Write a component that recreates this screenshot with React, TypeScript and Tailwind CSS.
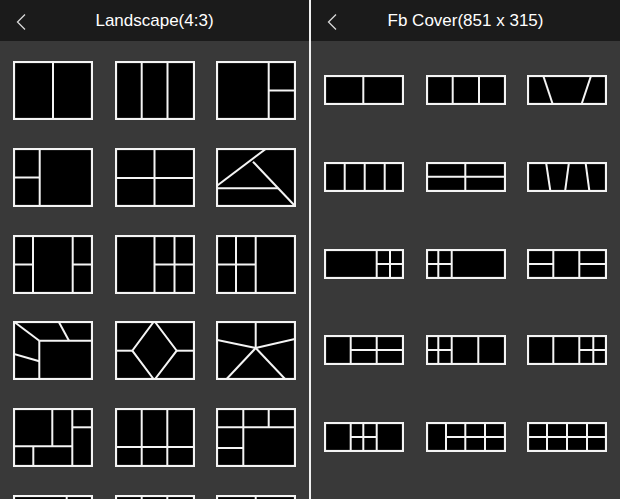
import React from "react";

type Shape =
  | { t: "l"; p: [number, number, number, number] }
  | { t: "pl"; p: number[] };

const L = (x1: number, y1: number, x2: number, y2: number): Shape => ({ t: "l", p: [x1, y1, x2, y2] });
const PL = (...p: number[]): Shape => ({ t: "pl", p });

function Tile({ w, h, shapes }: { w: number; h: number; shapes: Shape[] }) {
  return (
    <svg width={w} height={h} viewBox={`0 0 ${w} ${h}`} className="block shrink-0">
      <rect x={1} y={1} width={w - 2} height={h - 2} fill="#000" stroke="#f4f4f4" strokeWidth={2.2} />
      {shapes.map((s, i) =>
        s.t === "l" ? (
          <line key={i} x1={s.p[0]} y1={s.p[1]} x2={s.p[2]} y2={s.p[3]} stroke="#f4f4f4" strokeWidth={2} />
        ) : (
          <polyline key={i} points={s.p.join(" ")} fill="none" stroke="#f4f4f4" strokeWidth={2} />
        )
      )}
    </svg>
  );
}

const H = 59;
const leftTiles: Shape[][] = [
  [L(40, 0, 40, H)],
  [L(26.7, 0, 26.7, H), L(52.5, 0, 52.5, H)],
  [L(52.7, 0, 52.7, H), L(52.7, 29.5, 80, 29.5)],
  [L(26.7, 0, 26.7, H), L(0, 29.5, 26.7, 29.5)],
  [L(39.5, 0, 39.5, H), L(0, 30, 80, 30)],
  [L(0, 38.5, 51, 0), L(37, 13.7, 79, 58), L(0, 40.3, 62, 40.3)],
  [L(20, 0, 20, H), L(59.7, 0, 59.7, H), L(0, 29.5, 20, 29.5), L(59.7, 29.5, 80, 29.5)],
  [L(39.5, 0, 39.5, H), L(59.5, 0, 59.5, H), L(39.5, 29.5, 80, 29.5)],
  [L(20, 0, 20, H), L(39.7, 0, 39.7, H), L(0, 29.5, 39.7, 29.5)],
  [
    L(2, 1.5, 26.3, 19.7),
    L(26.3, 19.7, 80, 19.7),
    L(26.3, 19.7, 26.3, H),
    L(45.3, 0, 56, 19.7),
    L(0, 32.7, 26.3, 40.3),
  ],
  [PL(39.3, 0, 17.3, 29.7, 39.3, H, 61.7, 29.7, 39.3, 0), L(0, 29.7, 17.3, 29.7), L(61.7, 29.7, 80, 29.7)],
  [L(39.7, 0, 39.7, 27), L(0, 18.7, 39.7, 27), L(80, 17.7, 39.7, 27), L(39.7, 27, 9.7, H), L(39.7, 27, 70, H)],
  [L(59.3, 0, 59.3, H), L(39.3, 0, 39.3, 38.3), L(0, 38.3, 59.3, 38.3), L(20.3, 38.3, 20.3, H), L(59.3, 19.3, 80, 19.3)],
  [L(26.7, 0, 26.7, H), L(52.3, 0, 52.3, H), L(0, 39, 80, 39)],
  [L(0, 19.3, 80, 19.3), L(27.3, 0, 27.3, H), L(52.7, 0, 52.7, 19.3), L(0, 40, 27.3, 40)],
  [L(53.7, 0, 53.7, H)],
  [L(26.7, 0, 26.7, H), L(52.3, 0, 52.3, H)],
  [L(39.7, 0, 39.7, H)],
];

const R = 30;
const M = 15;
const rightTiles: Shape[][] = [
  [L(39.3, 0, 39.3, R)],
  [L(26.7, 0, 26.7, R), L(53, 0, 53, R)],
  [L(16, 0, 26, R), L(64.3, 0, 54.3, R)],
  [L(20.7, 0, 20.7, R), L(40.7, 0, 40.7, R), L(60.7, 0, 60.7, R)],
  [L(39.3, 0, 39.3, R), L(0, 14.7, 80, 14.7)],
  [L(19, 0, 23.5, R), L(42, 0, 38, R), L(58.5, 0, 62.5, R)],
  [L(52.7, 0, 52.7, R), L(66, 0, 66, R), L(52.7, M, 80, M)],
  [L(12.3, 0, 12.3, R), L(25.7, 0, 25.7, R), L(0, M, 25.7, M)],
  [L(26.3, 0, 26.3, R), L(52.3, 0, 52.3, R), L(0, M, 26.3, M), L(52.3, M, 80, M)],
  [L(26.7, 0, 26.7, R), L(52.7, 0, 52.7, R), L(26.7, M, 80, M)],
  [L(12.3, 0, 12.3, R), L(25.7, 0, 25.7, R), L(52.3, 0, 52.3, R), L(0, M, 25.7, M)],
  [L(26.3, 0, 26.3, R), L(52.3, 0, 52.3, R), L(66.3, 0, 66.3, R), L(52.3, M, 80, M)],
  [L(26.7, 0, 26.7, R), L(39.3, 0, 39.3, R), L(52.7, 0, 52.7, R), L(26.7, M, 52.7, M)],
  [L(20, 0, 20, R), L(39.3, 0, 39.3, R), L(59, 0, 59, R), L(20, M, 80, M)],
  [L(20, 0, 20, R), L(40, 0, 40, R), L(60, 0, 60, R), L(0, M, 80, M)],
];

function Header({ title }: { title: string }) {
  return (
    <div className="relative h-[41px] shrink-0 bg-[#1b1b1b] flex items-center justify-center">
      <svg width="12" height="18" viewBox="0 0 12 18" className="absolute left-[15px] top-[12.5px]">
        <polyline points="10,1.5 2.5,9 10,16.5" fill="none" stroke="#d8d8d8" strokeWidth={1.3} />
      </svg>
      <span
        className="text-[17px] text-white leading-none"
        style={{ fontFamily: '"Liberation Sans", Arial, sans-serif' }}
      >
        {title}
      </span>
    </div>
  );
}

export default function App() {
  return (
    <div className="w-[620px] h-[499px] overflow-hidden flex bg-[#393939]">
      <div className="w-[309px] flex flex-col shrink-0">
        <Header title="Landscape(4:3)" />
        <div className="flex-1 bg-[#393939] px-[13px] pt-[20px] overflow-hidden">
          <div className="grid grid-cols-[80px_80px_80px] justify-between gap-y-[27.8px]">
            {leftTiles.map((s, i) => (
              <Tile key={i} w={80} h={59} shapes={s} />
            ))}
          </div>
        </div>
      </div>
      <div className="w-[2px] bg-[#f0f0f0] shrink-0" />
      <div className="w-[309px] flex flex-col shrink-0">
        <Header title="Fb Cover(851 x 315)" />
        <div className="flex-1 bg-[#393939] px-[13px] pt-[34px] overflow-hidden">
          <div className="grid grid-cols-[80px_80px_80px] justify-between gap-y-[56.75px]">
            {rightTiles.map((s, i) => (
              <Tile key={i} w={80} h={30} shapes={s} />
            ))}
          </div>
        </div>
      </div>
    </div>
  );
}
